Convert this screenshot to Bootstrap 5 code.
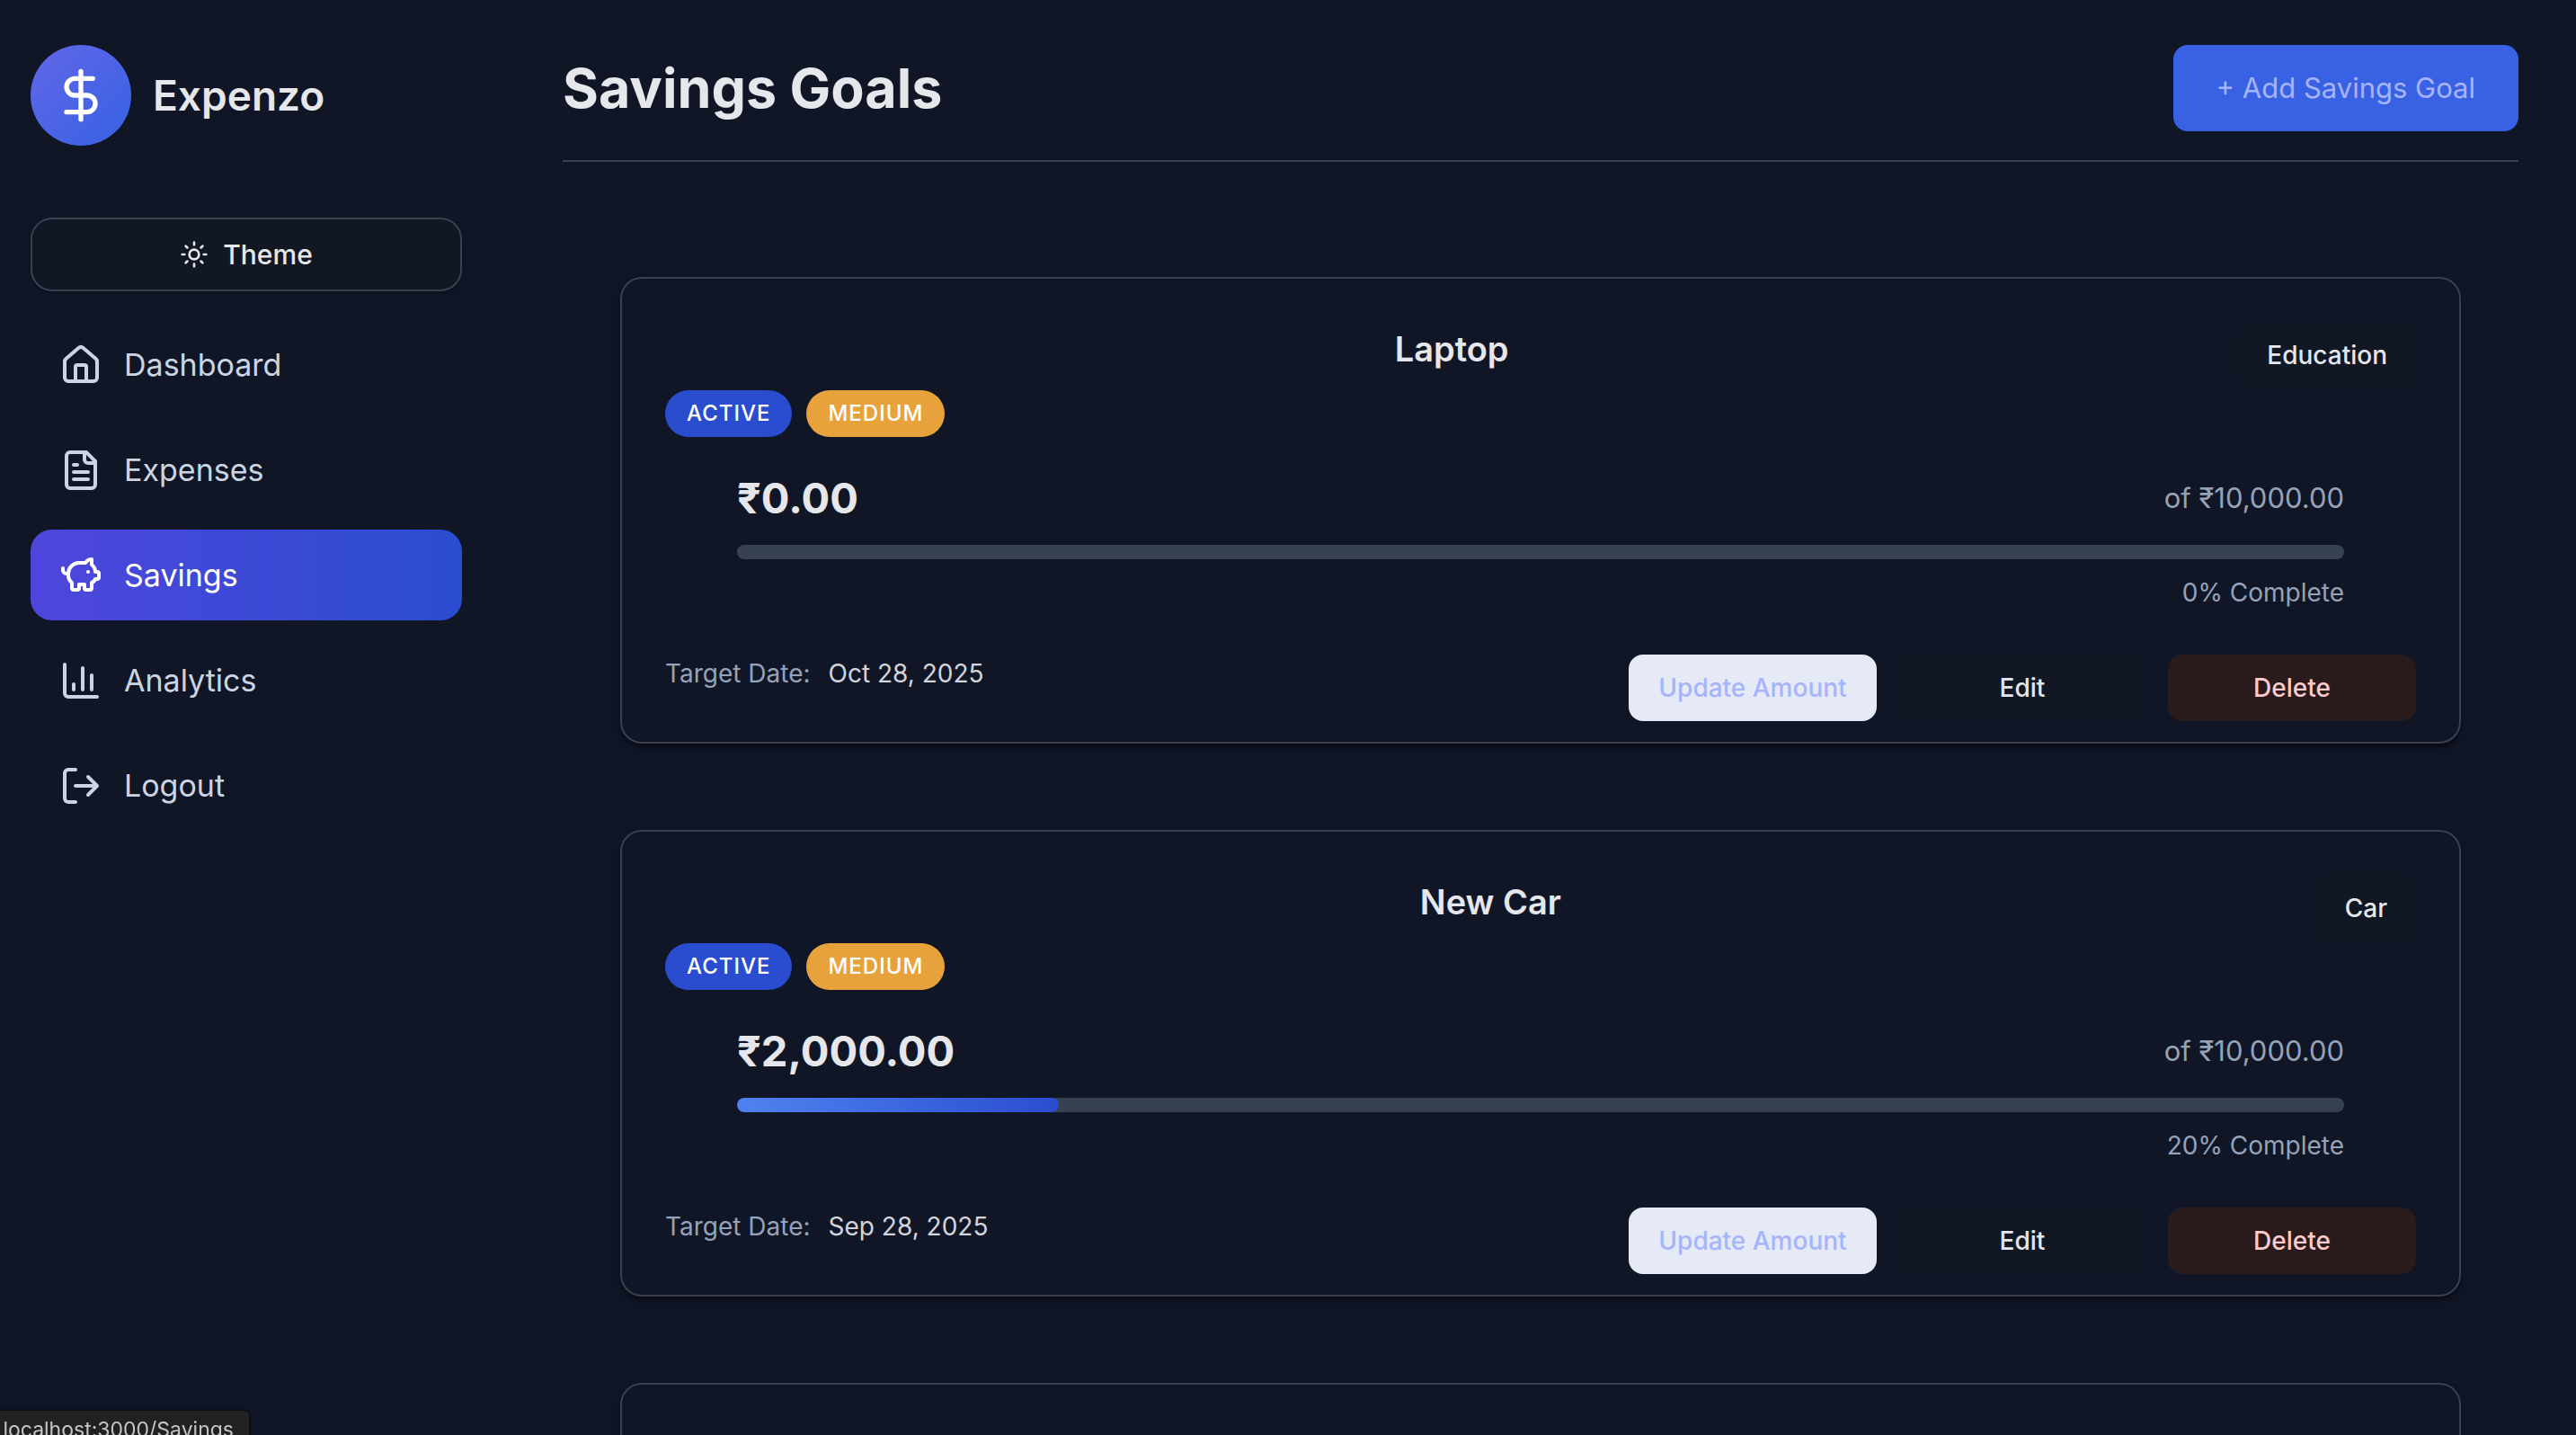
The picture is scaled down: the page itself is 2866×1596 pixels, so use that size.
<!DOCTYPE html>
<html lang="en">
<head>
<meta charset="utf-8">
<meta name="viewport" content="width=device-width, initial-scale=1">
<title>Expenzo – Savings Goals</title>
<link href="https://cdn.jsdelivr.net/npm/bootstrap@5.3.0/dist/css/bootstrap.min.css" rel="stylesheet">
<style>
:root{--ink:#e5e7eb;--muted:#94a3b8;--soft:#cbd5e1;--line:#374151;--page:#111627;--panel:#111823;--blue:#2a4dd0}
html,body{height:100%}
body{background:var(--page);color:var(--ink);font-family:Inter,"Liberation Sans",sans-serif;font-size:28px;line-height:42px;overflow:hidden}
.app-shell{min-height:100%}
.side-bar{width:548px;padding:50px 34px}
.brand-mark{width:112px;height:112px;background:linear-gradient(135deg,#6366e8,#3562e3);color:#fff}
.brand-name{font-size:46px;line-height:60px;font-weight:600;color:var(--ink)}
.brand-row{gap:24px;margin-bottom:80px}
.theme-btn{height:82px;border:2px solid var(--line);border-radius:24px;background:var(--panel);color:var(--ink);font-size:30px;font-weight:500;gap:16px;margin-bottom:31px;box-shadow:0 2px 4px rgba(0,0,0,.3)}
.theme-btn:hover{background:var(--panel);color:var(--ink);border-color:var(--line)}
.side-nav{gap:16px}
.side-nav .nav-link{height:101px;padding:0 32px;gap:24px;border-radius:24px;color:var(--soft);font-size:34px;line-height:48px}
.side-nav .nav-link.active{color:#fff;background:linear-gradient(90deg,#4f46dc,var(--blue))}
svg{fill:none;stroke:currentColor;stroke-width:2;stroke-linecap:round;stroke-linejoin:round;flex:none}
.main-area{padding:50px 64px 0 78px;min-width:0}
.page-head{padding-bottom:32px;border-bottom:2px solid var(--line);margin-bottom:128px}
.page-head h1{font-size:61px;line-height:96px;font-weight:700}
.add-btn{height:96px;padding:0 48px;border:0;border-radius:16px;background:#3861e4;color:#a5b4fc;font-size:31px}
.goal-list{gap:96px;padding:0 64px}
.goal{border:2px solid var(--line);border-radius:24px;padding:48px 48px 23px;background:var(--page);box-shadow:0 4px 6px rgba(0,0,0,.5)}
.goal-head{min-height:76px}
.goal-head h2{font-size:38px;line-height:60px;font-weight:600}
.tag-box{padding:16px 32px;border-radius:16px;background:var(--panel);font-weight:500;color:var(--ink)}
.pill{height:52px;padding:0 24px;border-radius:26px;font-size:24px;line-height:52px;font-weight:500;letter-spacing:1px;color:#fff}
.pill-active{background:var(--blue)}
.pill-medium{background:#e8a23c}
.meter-box{padding:32px 80px 48px}
.saved{font-size:47px;line-height:72px;font-weight:700}
.total{font-size:31px;color:var(--muted)}
.progress{height:16px;border-radius:8px;background:var(--line);margin:16px 0}
.progress-bar{border-radius:8px;background:linear-gradient(90deg,#4f82f0,var(--blue))}
.done,.due{color:var(--muted)}
.due{gap:20px}
.due time{color:#d1d5db}
.goal-actions{display:grid;grid-template-columns:repeat(3,276px);gap:24px}
.goal-actions .btn{height:74px;padding:0;border:0;border-radius:16px;font-size:28px;font-weight:500}
.btn-update{background:#e6eaf6;color:#a5b4fc}
.btn-edit{background:var(--panel);color:var(--ink)}
.btn-delete{background:#291b1b;color:#fecaca}
.status-tip{position:fixed;left:0;bottom:-17px;width:277px;height:44px;padding-right:17px;background:#202221;color:#c5c5c5;border-radius:0 6px 0 0;font-size:23px;line-height:42px;box-shadow:0 0 4px #000}
</style>
</head>
<body>
<div class="app-shell d-flex">
  <aside class="side-bar flex-shrink-0">
    <div class="brand-row d-flex align-items-center">
      <div class="brand-mark rounded-circle d-flex align-items-center justify-content-center">
        <svg width="64" height="64" viewBox="0 0 24 24"><path d="M12 2v20M17 5H9.5a3.5 3.5 0 0 0 0 7h5a3.5 3.5 0 0 1 0 7H6"/></svg>
      </div>
      <div class="brand-name">Expenzo</div>
    </div>
    <button type="button" class="theme-btn btn w-100 d-flex align-items-center justify-content-center">
      <svg width="32" height="32" viewBox="0 0 24 24"><circle cx="12" cy="12" r="4"/><path d="M12 2v2M12 20v2M4.93 4.93l1.41 1.41M17.66 17.66l1.41 1.41M2 12h2M20 12h2M6.34 17.66l-1.41 1.41M19.07 4.93l-1.41 1.41"/></svg>
      Theme
    </button>
    <nav class="side-nav nav flex-column">
      <a class="nav-link d-flex align-items-center" href="#"><svg width="48" height="48" viewBox="0 0 24 24"><path d="M15 21v-8a1 1 0 0 0-1-1h-4a1 1 0 0 0-1 1v8"/><path d="M3 10a2 2 0 0 1 .709-1.528l7-5.999a2 2 0 0 1 2.582 0l7 5.999A2 2 0 0 1 21 10v9a2 2 0 0 1-2 2H5a2 2 0 0 1-2-2z"/></svg>Dashboard</a>
      <a class="nav-link d-flex align-items-center" href="#"><svg width="48" height="48" viewBox="0 0 24 24"><path d="M15 2H6a2 2 0 0 0-2 2v16a2 2 0 0 0 2 2h12a2 2 0 0 0 2-2V7Z"/><path d="M14 2v4a2 2 0 0 0 2 2h4M10 9H8M16 13H8M16 17H8"/></svg>Expenses</a>
      <a class="nav-link active d-flex align-items-center" href="#" aria-current="page"><svg width="48" height="48" viewBox="0 0 24 24"><path d="M11 17h3v2a1 1 0 0 0 1 1h2a1 1 0 0 0 1-1v-3a3.16 3.16 0 0 0 2-2h1a1 1 0 0 0 1-1v-2a1 1 0 0 0-1-1h-1a5 5 0 0 0-2-4V3a4 4 0 0 0-3.2 1.6l-.3.4H11a6 6 0 0 0-6 6v1a5 5 0 0 0 2 4v3a1 1 0 0 0 1 1h2a1 1 0 0 0 1-1z"/><path d="M16 10h.01M2 8v1a2 2 0 0 0 2 2h1"/></svg>Savings</a>
      <a class="nav-link d-flex align-items-center" href="#"><svg width="48" height="48" viewBox="0 0 24 24"><path d="M3 3v16a2 2 0 0 0 2 2h16M18 17V9M13 17V5M8 17v-3"/></svg>Analytics</a>
      <a class="nav-link d-flex align-items-center" href="#"><svg width="48" height="48" viewBox="0 0 24 24"><path d="M9 21H5a2 2 0 0 1-2-2V5a2 2 0 0 1 2-2h4M16 17l5-5-5-5M21 12H9"/></svg>Logout</a>
    </nav>
  </aside>

  <main class="main-area flex-grow-1">
    <header class="page-head d-flex justify-content-between align-items-center">
      <h1 class="mb-0">Savings Goals</h1>
      <button type="button" class="add-btn btn">+ Add Savings Goal</button>
    </header>

    <div class="goal-list d-flex flex-column">
      <article class="goal">
        <div class="goal-head d-flex align-items-start">
          <h2 class="mb-0 flex-grow-1 text-center">Laptop</h2>
          <span class="tag-box">Education</span>
        </div>
        <div class="d-flex gap-3"><span class="pill pill-active">ACTIVE</span><span class="pill pill-medium">MEDIUM</span></div>
        <div class="meter-box">
          <div class="d-flex justify-content-between align-items-center"><span class="saved">₹0.00</span><span class="total">of ₹10,000.00</span></div>
          <div class="progress" role="progressbar" aria-label="Laptop" aria-valuenow="0" aria-valuemin="0" aria-valuemax="100"><div class="progress-bar" style="width:0%"></div></div>
          <div class="done text-end">0% Complete</div>
        </div>
        <div class="d-flex justify-content-between align-items-start">
          <div class="due d-flex"><span>Target Date:</span><time datetime="2025-10-28">Oct 28, 2025</time></div>
          <div class="goal-actions"><button type="button" class="btn btn-update">Update Amount</button><button type="button" class="btn btn-edit">Edit</button><button type="button" class="btn btn-delete">Delete</button></div>
        </div>
      </article>

      <article class="goal">
        <div class="goal-head d-flex align-items-start">
          <h2 class="mb-0 flex-grow-1 text-center">New Car</h2>
          <span class="tag-box">Car</span>
        </div>
        <div class="d-flex gap-3"><span class="pill pill-active">ACTIVE</span><span class="pill pill-medium">MEDIUM</span></div>
        <div class="meter-box">
          <div class="d-flex justify-content-between align-items-center"><span class="saved">₹2,000.00</span><span class="total">of ₹10,000.00</span></div>
          <div class="progress" role="progressbar" aria-label="New Car" aria-valuenow="20" aria-valuemin="0" aria-valuemax="100"><div class="progress-bar" style="width:20%"></div></div>
          <div class="done text-end">20% Complete</div>
        </div>
        <div class="d-flex justify-content-between align-items-start">
          <div class="due d-flex"><span>Target Date:</span><time datetime="2025-09-28">Sep 28, 2025</time></div>
          <div class="goal-actions"><button type="button" class="btn btn-update">Update Amount</button><button type="button" class="btn btn-edit">Edit</button><button type="button" class="btn btn-delete">Delete</button></div>
        </div>
      </article>

      <article class="goal">
        <div class="goal-head"></div>
      </article>
    </div>
  </main>
</div>
<div class="status-tip d-flex justify-content-end">localhost:3000/Savings</div>
<script src="https://cdn.jsdelivr.net/npm/bootstrap@5.3.0/dist/js/bootstrap.bundle.min.js"></script>
</body>
</html>
